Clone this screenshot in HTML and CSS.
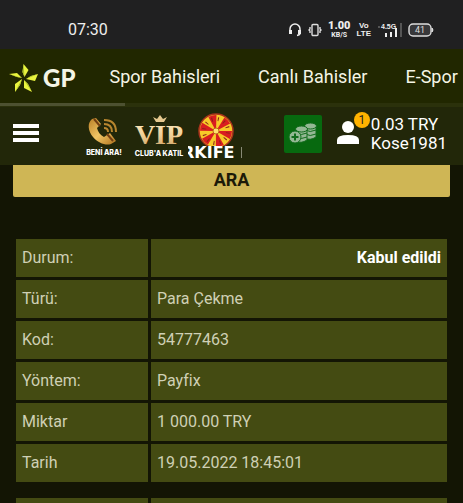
FILE: index.html
```html
<!DOCTYPE html>
<html lang="tr">
<head>
<meta charset="utf-8">
<meta name="viewport" content="width=device-width, initial-scale=1">
<title>GP</title>
<link rel="stylesheet" href="styles.css">
</head>
<body>
<div class="status">
  <time class="clock">07:30</time>
  <div class="indicators">
    <svg width="14" height="14" viewBox="0 0 14 14" fill="none" stroke="#eee" stroke-width="1.5"><path d="M2 8V6a5 5 0 0 1 10 0v4q0 2-3 2.500"/><path d="M2.500 7v4M11.500 7v4" stroke-width="3"/></svg>
    <svg width="14" height="14" viewBox="0 0 14 14" fill="none" stroke="#ddd" stroke-width="1.400"><rect x="4" y="1.500" width="6" height="11" rx="1"/><path d="M2 4v2l-1 1 1 1v2M12 4v2l1 1-1 1v2"/></svg>
    <div class="speed"><b>1.00</b><small>KB/S</small></div>
    <div class="volte"><span>Vo</span><span>LTE</span></div>
    <svg class="signal" width="25" height="16" viewBox="0 0 25 16"><path d="M1 4h2v2H1z" fill="#555"/><path d="M8 11h2v4H8zM13 10h2v5h-2zM18 6h2v9h-2z" fill="#eee"/><path d="M23 1h2v14h-2z" fill="#555"/><text x="4" y="7" class="signal-text">4.5G</text></svg>
    <svg width="26" height="14" viewBox="0 0 26 14"><rect x="1" y="1" width="22" height="12" rx="4" fill="#38383a" stroke="#ddd" stroke-width="1.400"/><path d="M24 5q2 2 0 4z" fill="#ddd" stroke="#ddd"/><text x="12" y="10" text-anchor="middle" class="battery-text">41</text></svg>
  </div>
</div>
<header class="header">
  <nav class="nav">
    <a class="brand" href="#">
      <svg width="30" height="30" viewBox="0 0 30 30" fill="#e9f43e"><path d="M14.500 1l5 6-4 7-2-5z"/><path d="M29 11l-3 7-9-2 5-3z"/><path d="M23 29l-8-4 0-8 4 4z"/><path d="M6 29l0-8 7-5-2 6z"/><path d="M0 11l8-1 5 5-5-1z"/><path d="M14.500 1l-1 8 2 5zM29 11l-7 2-5 3zM23 29l-4-8-4-4zM6 29l5-7 2-6zM0 11l8 3 5 1z" fill="#a8bd2b"/></svg>
      <span>GP</span>
    </a>
    <a href="#">Spor Bahisleri</a>
    <a href="#">Canlı Bahisler</a>
    <a href="#">E-Spor</a>
  </nav>
  <div class="track"><div class="thumb"></div></div>
  <div class="tools">
    <button class="menu" aria-label="Menü"><span></span><span></span><span></span></button>
    <div class="promos">
      <a href="#" aria-label="Beni ara">
        <svg width="40" height="46" viewBox="0 0 40 46">
          <defs><linearGradient id="gold" x1="0" y1="0" x2="1" y2="1"><stop offset="0" stop-color="#b87e25"/><stop offset=".5" stop-color="#f0c565"/><stop offset="1" stop-color="#ae701c"/></linearGradient></defs>
          <path d="M8 6C3 10 4 18 9 24s13 9 18 7l5-3-6-8-6 4c-4-2-6-5-7-9l4-4-5-6z" fill="url(#gold)"/>
          <path d="M10 6l6 7M23 21l6 7" stroke="#713e12" stroke-width="2"/>
          <path d="M20 15q4 0 4 4M20 11q8 0 8 8M20 7q12 0 12 12" fill="none" stroke="#b8862f" stroke-width="2"/>
          <text x="20" y="42" text-anchor="middle" class="promo-call">BENİ ARA!</text>
        </svg>
      </a>
      <a href="#" aria-label="VIP Club'a katıl">
        <svg width="50" height="46" viewBox="0 0 50 46">
          <defs><linearGradient id="cream" x1="0" y1="0" x2="0" y2="1"><stop offset="0" stop-color="#fff0ca"/><stop offset=".55" stop-color="#efcd93"/><stop offset="1" stop-color="#c99b5c"/></linearGradient></defs>
          <path d="M22 9l-3-5 4 2 3-4 3 4 4-2-3 5z" fill="#e6c990"/>
          <text x="25" y="31" text-anchor="middle" class="promo-vip">VIP</text>
          <text x="25" y="43" text-anchor="middle" class="promo-club">CLUB'A KATIL</text>
        </svg>
      </a>
      <a href="#" aria-label="Çarkıfelek">
        <svg width="54" height="46" viewBox="0 0 54 46">
          <circle cx="28" cy="18" r="17" fill="#f7c928"/>
          <circle cx="28" cy="18" r="8" fill="none" stroke="#d91d20" stroke-width="16" stroke-dasharray="4.189 4.189"/>
          <circle cx="28" cy="18" r="17" fill="none" stroke="#a8321c" stroke-width="1.500"/>
          <circle cx="28" cy="18" r="12" fill="none" stroke="#8b2418" stroke-width="4" stroke-dasharray="1 5.283" stroke-dashoffset="-1.500"/>
          <circle cx="28" cy="18" r="3" fill="#ffdf6d" stroke="#b96b1b"/>
          <path d="M0 33h54v13H0z" fill="#222709"/>
          <text x="-6" y="45" class="promo-wheel">RKIFE</text>
          <path d="M53 34h1v11h-1z" fill="#888a75"/>
        </svg>
      </a>
    </div>
    <button class="deposit" aria-label="Para yatır">
      <svg width="30" height="24" viewBox="0 0 30 24" fill="#94b894" stroke="#126c1d" stroke-width="1">
        <path d="M17 4v12q5 3 11-1V4z"/><ellipse cx="22.500" cy="4" rx="6" ry="3"/><path d="M17 8q5 3 11 0M17 12q5 3 11 0" fill="none"/>
        <path d="M8 7v12q5 3 11-1V7z"/><ellipse cx="13.500" cy="7" rx="6" ry="3"/><path d="M8 11q5 3 11 0M8 15q5 3 11 0" fill="none"/>
        <circle cx="7" cy="15" r="6"/><path d="M7 11.500v7M3.500 15h7" stroke-width="2"/>
      </svg>
    </button>
    <a class="account" href="#">
      <span class="avatar">
        <svg width="22" height="23" viewBox="0 0 22 23" fill="#fff"><circle cx="11" cy="6" r="6"/><path d="M0 23v-4q0-5 11-5t11 5v4z"/></svg>
        <span class="badge">1</span>
      </span>
      <span class="balance"><span>0.03 TRY</span><span>Kose1981</span></span>
    </a>
  </div>
</header>
<main class="content">
  <button class="search">ARA</button>
  <table class="record">
    <tbody>
      <tr><th scope="row">Durum:</th><td class="state">Kabul edildi</td></tr>
      <tr><th scope="row">Türü:</th><td>Para Çekme</td></tr>
      <tr><th scope="row">Kod:</th><td>54777463</td></tr>
      <tr><th scope="row">Yöntem:</th><td>Payfix</td></tr>
      <tr><th scope="row">Miktar</th><td>1 000.00 TRY</td></tr>
      <tr><th scope="row">Tarih</th><td>19.05.2022 18:45:01</td></tr>
    </tbody>
  </table>
  <table class="record">
    <tbody><tr><td class="label"></td><td></td></tr></tbody>
  </table>
</main>
</body>
</html>
```
FILE: styles.css
```css
* { box-sizing: border-box; }
body {
  margin: 0;
  height: 100vh;
  overflow: hidden;
  background: #131504;
  color: #fff;
  font-family: Roboto, sans-serif;
}
svg { display: block; flex: none; }
a { color: inherit; text-decoration: none; }
button { border: 0; padding: 0; font-family: inherit; }

.status {
  display: flex;
  justify-content: space-between;
  align-items: center;
  padding: 11px 29px 0 68px;
  height: 49px;
  background: #202021;
}
.clock { font-size: 16px; line-height: 20px; color: #eee; }
.indicators { display: flex; align-items: center; gap: 6px; color: #eee; }
.speed, .volte { display: flex; flex-direction: column; align-items: center; font-weight: 700; }
.speed b { font-size: 11px; line-height: 10px; }
.speed small { font-size: 7px; line-height: 8px; }
.volte { font: 700 8px/8px "Liberation Sans Narrow", "Liberation Sans", sans-serif; }
.signal-text { font: 700 7px "Liberation Sans Narrow", "Liberation Sans", sans-serif; fill: #eee; }
.battery-text { font: 9px Roboto, sans-serif; fill: #ddd; }

.header { background: #222709; }
.nav {
  display: flex;
  align-items: center;
  gap: 38px;
  height: 54px;
  padding-left: 9px;
  overflow: hidden;
  background: #212700;
  color: #f5f5e6;
  font-size: 18px;
  white-space: nowrap;
}
.nav a { flex: none; }
.nav .brand {
  display: flex;
  align-items: center;
  gap: 4px;
  padding-top: 4px;
  margin-right: -4px;
  font: 900 24px/30px Lato, sans-serif;
}
.track { height: 4px; background: #2b310b; }
.thumb { width: 27%; height: 3px; background: #4d5131; }

.tools {
  display: flex;
  align-items: center;
  height: 58px;
  padding: 0 16px 0 13px;
}
.menu {
  display: flex;
  flex-direction: column;
  gap: 3px;
  width: 26px;
  margin-bottom: 6px;
  background: none;
}
.menu span { height: 4px; background: #fff; }
.promos { display: flex; gap: 4px; margin-left: 45px; }
.promos a:first-child { margin-right: 6px; }
.promo-call { font: 800 7px Inter, sans-serif; fill: #fff; }
.promo-vip { font: 700 28px "Liberation Serif", serif; fill: url(#cream); }
.promo-club { font: 800 7px Inter, sans-serif; fill: #fff; }
.promo-wheel { font: 700 16px "DejaVu Sans", sans-serif; fill: #fff; }
.deposit {
  display: flex;
  justify-content: center;
  align-items: center;
  width: 38px;
  height: 38px;
  margin-left: auto;
  margin-bottom: 4px;
  border-radius: 2px;
  background: #07690f;
}
.account { display: flex; align-items: center; gap: 12px; margin-left: 15px; margin-bottom: 4px; }
.avatar { position: relative; margin-bottom: 4px; }
.badge {
  position: absolute;
  top: -9px;
  left: 17px;
  width: 16px;
  height: 16px;
  border-radius: 50%;
  background: #ffb300;
  color: #222;
  font-size: 12px;
  line-height: 16px;
  text-align: center;
}
.balance { display: flex; flex-direction: column; font-size: 17px; line-height: 19px; }

.content { padding: 0 13px; }
.search {
  display: block;
  width: 100%;
  height: 32px;
  padding-bottom: 4px;
  margin-bottom: 39px;
  border-radius: 0 0 2px 2px;
  background: #cfb655;
  color: #1c1a08;
  font-size: 18px;
  font-weight: 700;
}
.record {
  width: 100%;
  margin-bottom: 10px;
  border-spacing: 3px;
  table-layout: fixed;
  color: #cfd0b5;
  font-size: 16px;
  line-height: 20px;
}
.record th, .record td {
  height: 38px;
  padding: 0 6px;
  background: #444b12;
  font-weight: 400;
  text-align: left;
}
.record th, .record .label { width: 132px; }
.record .state { color: #fff; font-weight: 700; text-align: right; }
```
